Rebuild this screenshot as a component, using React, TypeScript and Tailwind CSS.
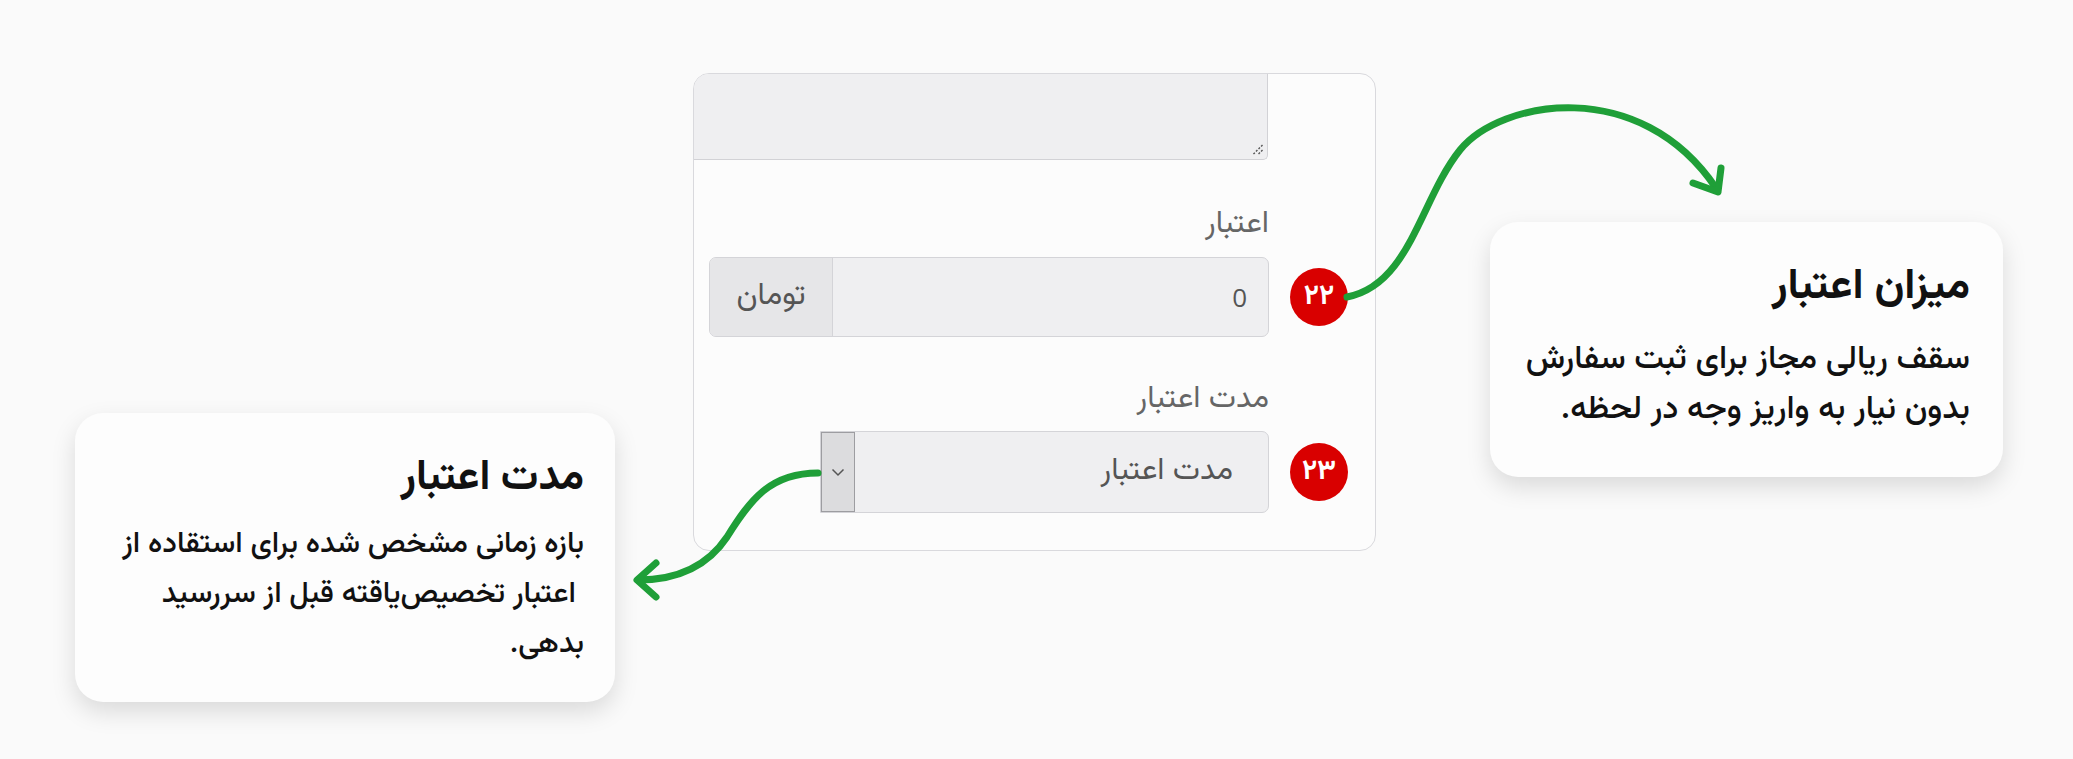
import React from "react";

const fa = "font-['Vazirmatn','Noto_Sans_Arabic','DejaVu_Sans',sans-serif]";

function Badge({ label }: { label: string }) {
  return (
    <div
      className={`${fa} flex h-[58px] w-[58px] shrink-0 items-center justify-center rounded-full bg-[#d90000] text-[28px] font-bold leading-none text-white`}
    >
      {label}
    </div>
  );
}

function ResizeGrip() {
  return (
    <svg
      className="absolute bottom-[3px] right-[3px]"
      width="13"
      height="13"
      viewBox="0 0 13 13"
      fill="none"
    >
      <path d="M11.5 2 L2 11.5" stroke="#555" strokeWidth="1.4" strokeDasharray="2 1.6" />
      <path d="M11.5 7 L7 11.5" stroke="#555" strokeWidth="1.4" strokeDasharray="2 1.6" />
    </svg>
  );
}

function FormCard() {
  return (
    <div className="ml-[78px] mt-[73px] h-[478px] w-[683px] shrink-0 overflow-hidden rounded-[16px] border border-[#d9d9dd] bg-[#fcfcfc]">
      {/* notes field, scrolled so only its lower edge shows */}
      <div className="relative h-[86px] w-[574px] rounded-br-[5px] border-b border-r border-[#d2d2d6] bg-[#efeff1]">
        <ResizeGrip />
      </div>

      <div className="flex flex-col pl-[15px] pr-[27px]" dir="ltr">
        <div
          dir="rtl"
          className={`${fa} mt-[47px] h-[36px] pr-[79px] text-right text-[31px] leading-[36px] text-[#666]`}
        >
          اعتبار
        </div>

        <div className="mt-[14px] flex items-center gap-[21px]">
          <div className="flex h-[80px] flex-1 overflow-hidden rounded-[7px] border border-[#d4d4d8] bg-[#efeff1]">
            <div
              dir="rtl"
              className={`${fa} flex w-[123px] items-center justify-center border-r border-[#d4d4d8] bg-[#e6e6e8] text-[31px] text-[#555]`}
            >
              تومان
            </div>
            <div className="flex flex-1 items-center justify-end pr-[21px] font-['Open_Sans',sans-serif] text-[26px] text-[#555]">
              0
            </div>
          </div>
          <Badge label="۲۲" />
        </div>

        <div
          dir="rtl"
          className={`${fa} mt-[45px] h-[36px] pr-[79px] text-right text-[31px] leading-[36px] text-[#666]`}
        >
          مدت اعتبار
        </div>

        <div className="mt-[13px] flex items-center justify-end gap-[21px]">
          <div className="flex h-[82px] w-[449px] overflow-hidden rounded-r-[7px] border border-[#d4d4d8] bg-[#efeff1]">
            <div className="flex w-[34px] items-center justify-center border border-[#9d9da1] bg-[#dcdcde]">
              <svg width="14" height="9" viewBox="0 0 14 9" fill="none">
                <path d="M1.5 1.5 L7 7 L12.5 1.5" stroke="#555" strokeWidth="1.5" />
              </svg>
            </div>
            <div
              dir="rtl"
              className={`${fa} flex flex-1 items-center pr-[35px] text-[31px] text-[#555]`}
            >
              مدت اعتبار
            </div>
          </div>
          <Badge label="۲۳" />
        </div>
      </div>
    </div>
  );
}

function Arrows() {
  return (
    <svg
      className="pointer-events-none absolute left-0 top-0"
      width="2073"
      height="759"
      viewBox="0 0 2073 759"
      fill="none"
    >
      <g stroke="#1f9f38" strokeWidth="7" strokeLinecap="round" strokeLinejoin="round">
        <path d="M1347 297 C1410 285 1420 200 1460 150 C1500 100 1640 75 1716 188" />
        <path d="M1693 183 L1718 192 L1721 168" />
        <path d="M818 473 C770 473 750 500 727 537 C705 570 672 580 638 580" />
        <path d="M656 563 L637 580 L656 597" />
      </g>
    </svg>
  );
}

export default function App() {
  return (
    <div className="relative flex h-[759px] w-[2073px] items-start overflow-hidden bg-[#fafafa] pl-[75px]">
      {/* duration callout */}
      <div
        dir="rtl"
        className={`${fa} mt-[413px] h-[289px] w-[540px] shrink-0 rounded-[28px] bg-[#fdfdfd] px-[31px] pt-[41px] text-right text-[#111] shadow-[0_10px_24px_rgba(0,0,0,0.13)]`}
      >
        <div className="whitespace-nowrap text-[42px] font-bold leading-[50px]">مدت اعتبار</div>
        <div className="mt-[16px] whitespace-nowrap text-[30px] font-medium leading-[50px]">
          <div>بازه زمانی مشخص شده برای استقاده از</div>
          <div className="pr-[8px]">اعتبار تخصیص‌یاقته قبل از سررسید</div>
          <div>بدهی.</div>
        </div>
      </div>

      <FormCard />

      {/* credit limit callout */}
      <div
        dir="rtl"
        className={`${fa} ml-[114px] mt-[222px] h-[255px] w-[513px] shrink-0 rounded-[28px] bg-[#fdfdfd] px-[33px] pt-[41px] text-right text-[#111] shadow-[0_10px_24px_rgba(0,0,0,0.13)]`}
      >
        <div className="whitespace-nowrap text-[43px] font-bold leading-[50px]">میزان اعتبار</div>
        <div className="mt-[22px] whitespace-nowrap text-[33px] font-medium leading-[50px]">
          <div>سقف ریالی مجاز برای ثبت سفارش</div>
          <div>بدون نیار به واریز وجه در لحظه.</div>
        </div>
      </div>

      <Arrows />
    </div>
  );
}
